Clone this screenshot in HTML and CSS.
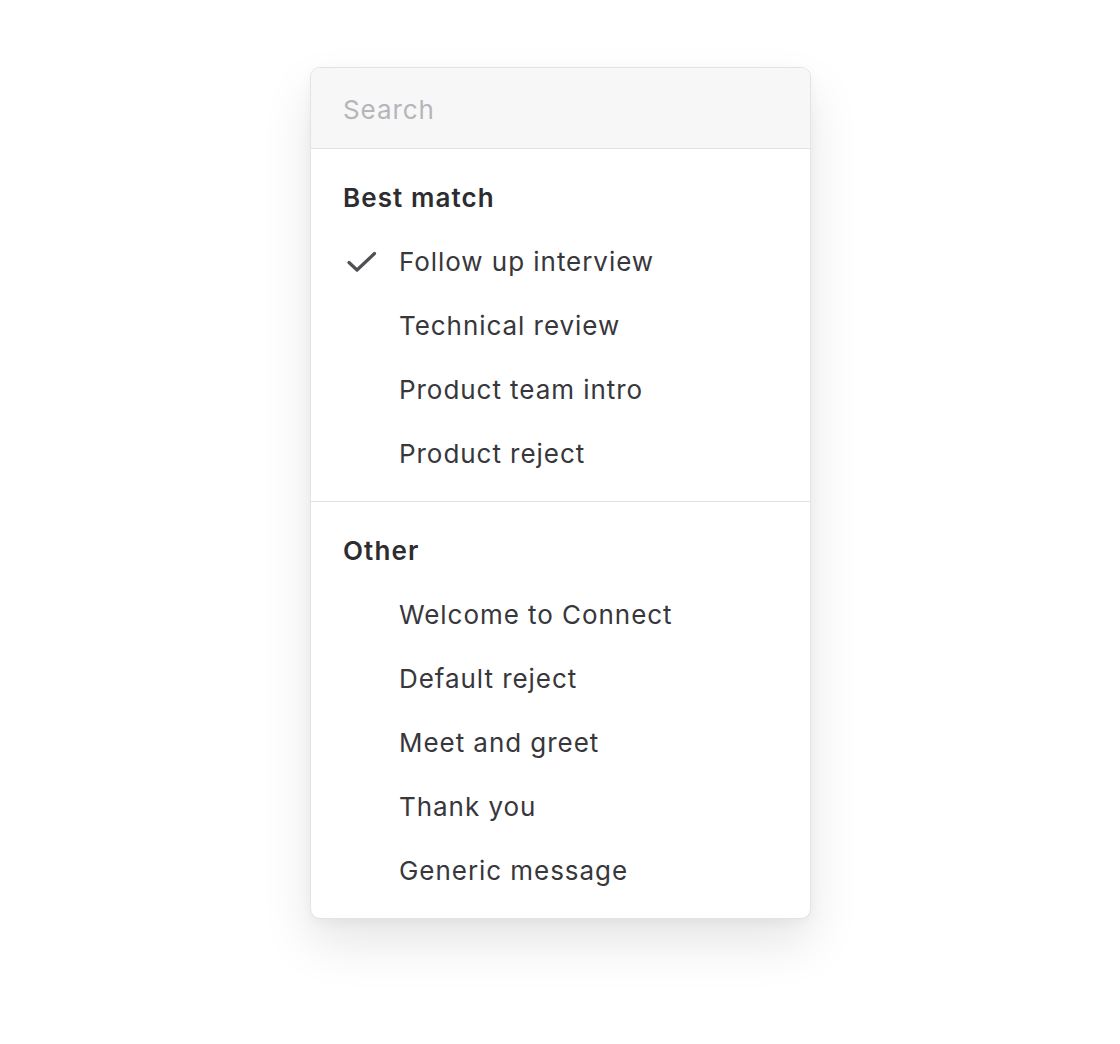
FILE: index.html
```html
<!DOCTYPE html>
<html lang="en">
<head>
<meta charset="utf-8">
<link rel="stylesheet" href="styles.css">
</head>
<body>
<div class="menu">
  <div class="search">Search</div>
  <div class="group">
    <div class="heading">Best match</div>
    <div class="item"><span class="check"><svg width="30" height="22" viewBox="0 0 30 22"><path d="M2 11.5 L10 19 L27.5 2.5" fill="none" stroke="#4f4f55" stroke-width="3.2" stroke-linecap="round" stroke-linejoin="round"/></svg></span>Follow up interview</div>
    <div class="item"><span class="check"></span>Technical review</div>
    <div class="item"><span class="check"></span>Product team intro</div>
    <div class="item"><span class="check"></span>Product reject</div>
  </div>
  <div class="group sep">
    <div class="heading">Other</div>
    <div class="item"><span class="check"></span>Welcome to Connect</div>
    <div class="item"><span class="check"></span>Default reject</div>
    <div class="item"><span class="check"></span>Meet and greet</div>
    <div class="item"><span class="check"></span>Thank you</div>
    <div class="item"><span class="check"></span>Generic message</div>
  </div>
</div>
</body>
</html>
```
FILE: styles.css
```css
html, body {
  margin: 0;
  padding: 0;
  background: #ffffff;
}
body {
  font-family: Inter, "Noto Sans", sans-serif;
  padding-top: 67px;
  display: flex;
  justify-content: center;
  height: 1044px;
  box-sizing: border-box;
}
.menu {
  width: 501px;
  margin-left: 1px;
  box-sizing: border-box;
  border: 1px solid #e3e3e5;
  border-radius: 10px;
  background: #ffffff;
  box-shadow: 0 24px 50px rgba(0, 0, 0, 0.10), 0 4px 12px rgba(0, 0, 0, 0.04);
  overflow: hidden;
  align-self: flex-start;
}
.search {
  height: 81px;
  box-sizing: border-box;
  background: #f7f7f7;
  border-bottom: 1px solid #e2e2e4;
  padding-left: 32px;
  padding-top: 3px;
  display: flex;
  align-items: center;
  font-size: 26px;
  letter-spacing: 0.9px;
  color: #b5b5ba;
}
.group {
  padding: 16px 0;
}
.group.sep {
  border-top: 1px solid #e2e2e4;
}
.heading {
  height: 64px;
  display: flex;
  align-items: center;
  padding-left: 32px;
  padding-top: 1px;
  box-sizing: border-box;
  font-size: 26px;
  font-weight: 600;
  letter-spacing: 1.1px;
  color: #2c2c31;
}
.item {
  height: 64px;
  display: flex;
  align-items: center;
  padding-left: 32px;
  padding-top: 1px;
  box-sizing: border-box;
  font-size: 26px;
  letter-spacing: 0.95px;
  color: #37373c;
}
.check {
  width: 56px;
  flex: none;
  display: flex;
  align-items: center;
  padding-left: 4px;
  box-sizing: border-box;
}
```
